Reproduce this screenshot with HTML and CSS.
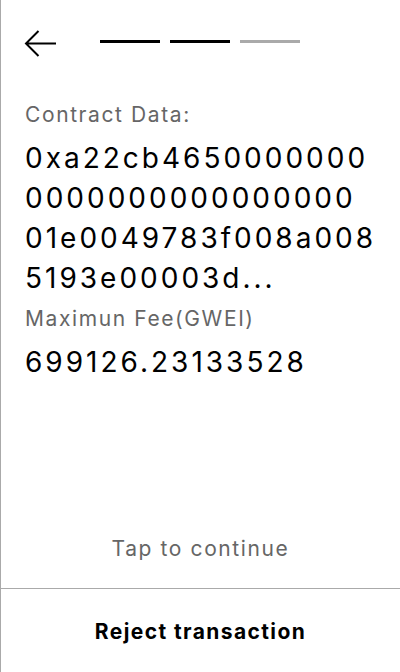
FILE: index.html
```html
<!DOCTYPE html>
<html>
<head>
<meta charset="utf-8">
<link rel="stylesheet" href="styles.css">
</head>
<body>
<div class="screen">
  <div class="header">
    <svg class="back" width="32" height="28" viewBox="0 0 32 28">
      <path d="M32 13.5 H2 M14.5 1 L2 13.5 L14.5 26" fill="none" stroke="#000" stroke-width="2"/>
    </svg>
    <div class="steps">
      <span class="step done"></span>
      <span class="step done"></span>
      <span class="step"></span>
    </div>
  </div>
  <div class="content">
    <div class="label">Contract Data:</div>
    <div class="value hex">
      <span class="line">0xa22cb4650000000</span>
      <span class="line">0000000000000000</span>
      <span class="line">01e0049783f008a008</span>
      <span class="line">5193e00003d...</span>
    </div>
    <div class="label">Maximun Fee(GWEI)</div>
    <div class="value">699126.23133528</div>
  </div>
  <div class="tap">Tap to continue</div>
  <div class="reject">Reject transaction</div>
</div>
</body>
</html>
```
FILE: styles.css
```css
html, body {
  margin: 0;
  padding: 0;
  background: #fff;
}
body {
  font-family: Inter, "Noto Sans", sans-serif;
  color: #000;
}
.screen {
  width: 399px;
  height: 672px;
  border-left: 1px solid #aaa;
  display: flex;
  flex-direction: column;
}
.header {
  display: flex;
  align-items: flex-start;
  padding: 30px 0 0 23px;
  height: 28px;
}
.back {
  display: block;
}
.steps {
  display: flex;
  gap: 10px;
  margin-left: 44px;
  margin-top: 10px;
}
.step {
  display: block;
  width: 60px;
  height: 3px;
  background: #aaa;
}
.step.done {
  background: #000;
}
.content {
  padding: 44px 0 0 24px;
  flex: 1;
}
.label {
  font-size: 21px;
  line-height: 26px;
  letter-spacing: 1.6px;
  color: #666;
  margin-bottom: 10px;
}
.value {
  font-size: 28px;
  line-height: 40px;
  letter-spacing: 3px;
  color: #000;
  margin-bottom: 8px;
}
.line {
  display: block;
  white-space: nowrap;
}
.tap {
  text-align: center;
  font-size: 21px;
  line-height: 26px;
  letter-spacing: 1.6px;
  color: #666;
  padding-bottom: 26px;
  border-bottom: 1px solid #aaa;
}
.reject {
  text-align: center;
  font-size: 21px;
  font-weight: 700;
  line-height: 26px;
  letter-spacing: 1.4px;
  padding: 30px 0 27px;
}
```
